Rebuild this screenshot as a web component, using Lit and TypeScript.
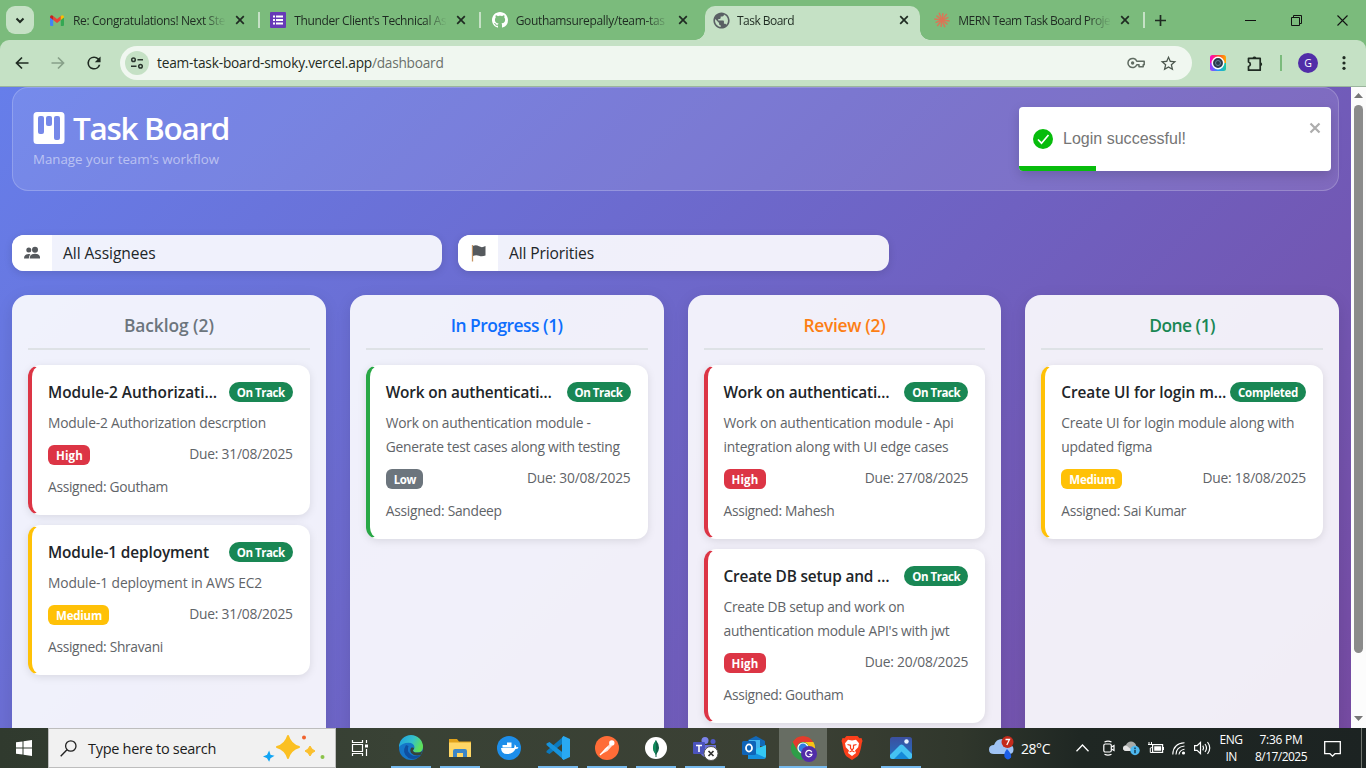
import { LitElement, html, css, svg } from "lit";
import { customElement, property } from "lit/decorators.js";

/** Single line of text whose tracking is adjusted so that it spans `w` pixels. */
@customElement("fit-text")
class FitText extends LitElement {
  @property() text = "";
  @property({ type: Number }) w = 0;
  static styles = css`
    :host { display: inline-block; white-space: pre; text-align: left; }
    .s { display: inline-block; }
  `;
  updated() {
    const s = this.renderRoot.querySelector(".s") as HTMLElement;
    s.style.letterSpacing = "0px";
    const natural = s.getBoundingClientRect().width;
    if (this.w) {
      s.style.letterSpacing = `${(this.w - natural) / this.text.length}px`;
      this.style.width = `${this.w}px`;
    }
  }
  render() { return html`<span class="s">${this.text}</span>`; }
}

const t = (text: string, w: number) => html`<fit-text .text=${text} .w=${w}></fit-text>`;

const icon = (w: number, h: number, vb: string, body: unknown) =>
  html`<svg width=${w} height=${h} viewBox=${vb} fill="none">${body}</svg>`;

const closeX = icon(10, 10, "0 0 10 10", svg`<path d="M1.2 1.2 8.8 8.8M8.8 1.2 1.2 8.8" stroke="#1f2b22" stroke-width="1.7"/>`);

const gmail = icon(14, 11, "0 0 14 11", svg`
  <path d="M0 2v8q0 1 1 1h2.200V4z" fill="#4285f4"/><path d="M14 2v8q0 1-1 1h-2.200V4z" fill="#34a853"/>
  <path d="M3.200 1 7 4l3.800-3v4L7 8 3.200 5z" fill="#ea4335"/>
  <path d="M0 2.200C0 .2 1.800-.4 3.200 1v4L0 2.600z" fill="#c5221f"/><path d="M14 2.200C14 .2 12.200-.4 10.800 1v4L14 2.600z" fill="#fbbc04"/>`);
const forms = icon(16, 16, "0 0 16 16", svg`
  <rect width="16" height="16" rx="1" fill="#673ab7"/>
  <path d="M3 4.500h2M3 8h2M3 11.500h2M6 4.500h7M6 8h7M6 11.500h7" stroke="#fff" stroke-width="2"/>`);
const github = icon(16, 16, "0 0 16 16", svg`<path fill="#fff" d="M8 0C3.58 0 0 3.58 0 8c0 3.54 2.29 6.53 5.47 7.59.4.07.55-.17.55-.38 0-.19-.01-.82-.01-1.49-2.01.37-2.53-.49-2.69-.94-.09-.23-.48-.94-.82-1.13-.28-.15-.68-.52-.01-.53.63-.01 1.08.58 1.23.82.72 1.21 1.87.87 2.33.66.07-.52.28-.87.51-1.07-1.78-.2-3.64-.89-3.64-3.95 0-.87.31-1.59.82-2.15-.08-.2-.36-1.02.08-2.12 0 0 .67-.21 2.2.82.64-.18 1.32-.27 2-.27s1.36.09 2 .27c1.53-1.04 2.2-.82 2.2-.82.44 1.1.16 1.92.08 2.12.51.56.82 1.27.82 2.15 0 3.07-1.87 3.75-3.65 3.95.29.25.54.73.54 1.48 0 1.07-.01 1.93-.01 2.2 0 .21.15.46.55.38A8.01 8.01 0 0 0 16 8c0-4.420-3.580-8-8-8"/>`);
const globe = icon(17, 17, "1.500 1.500 21 21", svg`<path fill="#5a6064" d="M12 2C6.480 2 2 6.480 2 12s4.480 10 10 10 10-4.480 10-10S17.520 2 12 2zm-1 17.930c-3.950-.49-7-3.850-7-7.930 0-.62.08-1.210.21-1.790L9 15v1c0 1.100.9 2 2 2v1.930zm6.900-2.540c-.26-.81-1-1.390-1.900-1.390h-1v-3c0-.55-.45-1-1-1H8v-2h2c.55 0 1-.45 1-1V7h2c1.100 0 2-.9 2-2v-.41c2.930 1.190 5 4.060 5 7.410 0 2.080-.8 3.970-2.100 5.390z"/>`);
const burst = icon(16, 16, "-8 -8 16 16", svg`${Array.from({ length: 12 }, (_, i) =>
  svg`<path d="M0 0V${i % 2 ? -7.8 : -7}" stroke="#d97757" stroke-width="1.500" transform="rotate(${i * 30 + 8})"/>`)}`);

const tabs = [
  { icon: gmail, title: "Re: Congratulations! Next Ste", w: 152 },
  { icon: forms, title: "Thunder Client's Technical As", w: 152 },
  { icon: github, title: "Gouthamsurepally/team-tas", w: 149 },
  { icon: globe, title: "Task Board", w: 57, active: true },
  { icon: burst, title: "MERN Team Task Board Proje", w: 152 },
];

type Task = { title: string; tw: number; status: string; desc: [string, number][]; prio: "High" | "Medium" | "Low"; due: string; who: string; ww: number };
const columns: { name: string; w: number; cls: string; tasks: Task[] }[] = [
  { name: "Backlog (2)", w: 90, cls: "grey", tasks: [
    { title: "Module-2 Authorizati…", tw: 169, status: "On Track", desc: [["Module-2 Authorization descrption", 218]], prio: "High", due: "31/08/2025", who: "Goutham", ww: 120 },
    { title: "Module-1 deployment", tw: 161, status: "On Track", desc: [["Module-1 deployment in AWS EC2", 214]], prio: "Medium", due: "31/08/2025", who: "Shravani", ww: 115 },
  ] },
  { name: "In Progress (1)", w: 112, cls: "blue", tasks: [
    { title: "Work on authenticati…", tw: 166, status: "On Track", desc: [["Work on authentication module -", 205], ["Generate test cases along with testing", 234]], prio: "Low", due: "30/08/2025", who: "Sandeep", ww: 116 },
  ] },
  { name: "Review (2)", w: 82, cls: "orange", tasks: [
    { title: "Work on authenticati…", tw: 166, status: "On Track", desc: [["Work on authentication module - Api", 230], ["integration along with UI edge cases", 225]], prio: "High", due: "27/08/2025", who: "Mahesh", ww: 111 },
    { title: "Create DB setup and …", tw: 166, status: "On Track", desc: [["Create DB setup and work on", 181], ["authentication module API's with jwt", 226]], prio: "High", due: "20/08/2025", who: "Goutham", ww: 120 },
  ] },
  { name: "Done (1)", w: 66, cls: "green", tasks: [
    { title: "Create UI for login m…", tw: 165, status: "Completed", desc: [["Create UI for login module along with", 233], ["updated figma", 91]], prio: "Medium", due: "18/08/2025", who: "Sai Kumar", ww: 125 },
  ] },
];
const prioWidth = { High: 27, Medium: 46, Low: 22 };

@customElement("browser-chrome")
class BrowserChrome extends LitElement {
  static styles = css`
    :host { display: block; flex: none; font-family: "Open Sans", "Noto Sans", sans-serif; color: #1f2b22; }
    svg { display: block; flex: none; }
    .strip { height: 40px; background: #7bbb7c; display: flex; align-items: flex-end; padding-left: 6px; }
    .drop { width: 28px; height: 28px; margin: 0 7px 6px 0; border-radius: 9px; background: #c5e1c5; display: grid; place-items: center; }
    .tab { position: relative; width: 215px; height: 34px; margin-right: 6.330px; display: flex; align-items: center; box-sizing: border-box; padding: 0 11px 6px 8px; border-radius: 10px 10px 0 0; font-size: 12px; }
    .tab .fav { width: 16px; display: grid; place-items: center; margin-right: 8px; }
    .tab:first-of-type .fav { margin-right: 7px; }
    .tab .title { width: 152px; margin-right: 10px; overflow: hidden; line-height: 20px; padding-top: 1px; -webkit-mask-image: linear-gradient(90deg, #000 130px, transparent 153px); }
    .tab.sep::after { content: ""; position: absolute; left: 217px; top: 6px; width: 2px; height: 16px; background: #c5e1c5; }
    .active { background: #c5e1c5; }
    .active::before, .active::after { content: ""; position: absolute; bottom: 0; width: 10px; height: 10px; }
    .active::before { left: -10px; background: radial-gradient(circle at 0 0, transparent 9.500px, #c5e1c5 10px); }
    .active::after { right: -10px; background: radial-gradient(circle at 100% 0, transparent 9.500px, #c5e1c5 10px); }
    .plus { margin: 0 0 14px 7px; }
    .win { margin-left: auto; display: flex; gap: 35px; padding: 0 18px 14px 0; align-items: center; }
    .barwrap { background: #7bbb7c; }
    .bar { height: 46px; background: #c5e1c5; border-radius: 9px 9px 0 0; display: flex; align-items: center; padding-left: 15px; border-bottom: 1px solid #9bb59d; }
    .nav { display: flex; gap: 22px; align-items: center; width: 105px; }
    .url { width: 1072px; height: 34px; border-radius: 17px; background: #f0f7f0; display: flex; align-items: center; box-sizing: border-box; padding: 0 15px 0 5px; }
    .tune { width: 24px; height: 24px; border-radius: 50%; background: #c5e1c5; display: grid; place-items: center; margin-right: 8px; }
    .addr { font-size: 13.700px; line-height: 20px; }
    .path { color: #6a706b; }
    .acts { margin-left: auto; display: flex; gap: 15px; align-items: center; }
    .ext { display: flex; align-items: center; gap: 21px; padding-left: 18px; }
    .line { width: 2px; height: 16px; background: #7bbb7c; margin: 0 -5px 0 -5px; }
    .ava { width: 20px; height: 20px; border-radius: 50%; background: #512da8; color: #fff; font-size: 10.500px; display: grid; place-items: center; line-height: 20px; margin-right: 3px; }
  `;
  render() {
    return html`
      <div class="strip">
        <div class="drop">${icon(10, 7, "0 0 10 7", svg`<path d="M1.500 1.500 5 5l3.500-3.500" stroke="#1f2b22" stroke-width="2"/>`)}</div>
        ${tabs.map((b, i) => html`
          <div class="tab ${b.active ? "active" : i !== 2 ? "sep" : ""}">
            <div class="fav">${b.icon}</div>
            <div class="title">${t(b.title, b.w)}</div>${closeX}
          </div>`)}
        <div class="plus">${icon(11, 11, "0 0 11 11", svg`<path d="M5.500 0v11M0 5.500h11" stroke="#1f2b22" stroke-width="1.700"/>`)}</div>
        <div class="win">
          ${icon(11, 11, "0 0 11 11", svg`<path d="M0 5.500h11" stroke="#111"/>`)}
          ${icon(11, 11, "0 0 11 11", svg`<path d="M.5 2.500h8v8h-8zM2.500 2.500v-2h8v8h-2" stroke="#111"/>`)}
          ${icon(11, 11, "0 0 11 11", svg`<path d="M.5.5l10 10M10.500.5l-10 10" stroke="#111" stroke-width="1.100"/>`)}
        </div>
      </div>
      <div class="barwrap"><div class="bar">
        <div class="nav">
          ${icon(14, 14, "0 0 14 14", svg`<path d="M13.500 7H2M7 1.500 1.500 7 7 12.500" stroke="#1f2b22" stroke-width="1.700"/>`)}
          ${icon(14, 14, "0 0 14 14", svg`<path d="M.5 7H12M7 1.500 12.500 7 7 12.500" stroke="#87a089" stroke-width="1.700"/>`)}
          ${icon(14, 14, "3.500 3.500 17 17", svg`<path fill="#1f2b22" d="M17.650 6.350A7.950 7.950 0 0 0 12 4a8 8 0 1 0 7.730 10h-2.080A6 6 0 1 1 12 6c1.660 0 3.140.69 4.220 1.780L13 11h7V4z"/>`)}
        </div>
        <div class="url">
          <div class="tune">${icon(14, 12, "0 0 14 12", svg`<g stroke="#2a352d" stroke-width="1.500"><circle cx="3.500" cy="2.800" r="1.800"/><path d="M7.500 2.800H13M1 9.200h5.500"/><circle cx="10.500" cy="9.200" r="1.800"/></g>`)}</div>
          <div class="addr">${t("team-task-board-smoky.vercel.app", 215)}<span class="path">${t("/dashboard", 71.500)}</span></div>
          <div class="acts">
            ${icon(18, 12, "0 0 18 12", svg`<path d="M9.800 4.200A4.600 4.600 0 1 0 9.800 7.800H12v2h4.200v-2H17.200V4.200z" stroke="#5f6b61" stroke-width="1.500" stroke-linejoin="round"/><circle cx="5.600" cy="6" r="1.700" fill="#5f6b61"/>`)}
            ${icon(17, 17, "1.200 1.200 21.600 21.600", svg`<path fill="#4c574e" d="M22 9.240l-7.190-.62L12 2 9.190 8.630 2 9.240l5.460 4.730L5.820 21 12 17.270 18.180 21l-1.630-7.030L22 9.240zM12 15.400l-3.760 2.270 1-4.280-3.320-2.880 4.380-.38L12 6.100l1.710 4.040 4.380.38-3.320 2.880 1 4.280L12 15.400z"/>`)}
          </div>
        </div>
        <div class="ext">
          ${icon(16, 16, "0 0 16 16", svg`<defs><linearGradient id="a" x1="0" y1="0" x2="1" y2="0"><stop stop-color="#f0c"/><stop offset=".5" stop-color="#f43"/><stop offset="1" stop-color="#fa0"/></linearGradient><linearGradient id="b"><stop stop-color="#a3f"/><stop offset=".5" stop-color="#29f"/><stop offset="1" stop-color="#1dc99b"/></linearGradient></defs>
            <path d="M0 8V2.500Q0 0 2.500 0h11Q16 0 16 2.500V8z" fill="url(#a)"/><path d="M0 8v5.500Q0 16 2.500 16h11q2.500 0 2.500-2.500V8z" fill="url(#b)"/><circle cx="8" cy="8" r="5.700" fill="#2c3a4c" stroke="#fff" stroke-width="1.500"/><circle cx="8" cy="8" r="2.500" stroke="#66809a"/>`)}
          ${icon(17, 17, "0 0 17 17", svg`<path d="M1.500 3.300H13.200V15.200H1.500V11.500A2.300 2.300 0 0 0 1.500 7z" stroke="#1f2b22" stroke-width="1.700" stroke-linejoin="round"/><path d="M5.600 3a1.900 1.900 0 0 1 3.700 0zM13.700 7.300a1.900 1.900 0 0 1 0 3.700z" fill="#1f2b22"/>`)}
          <div class="line"></div>
          <div class="ava">G</div>
          ${icon(4, 14, "0 0 4 14", svg`<g fill="#1f2b22"><circle cx="2" cy="1.700" r="1.600"/><circle cx="2" cy="7" r="1.600"/><circle cx="2" cy="12.300" r="1.600"/></g>`)}
        </div>
      </div></div>`;
  }
}

@customElement("task-card")
class TaskCard extends LitElement {
  @property({ attribute: false }) task!: Task;
  static styles = css`
    :host { display: block; }
    .card { background: #fff; border: 1px solid transparent; border-left: 4px solid; border-radius: 12px; padding: 16px 16px 15px; box-shadow: 0 2px 8px rgba(0, 0, 0, .1); color: #5f6468; font-size: 13.800px; line-height: 24px; }
    .High { border-left-color: #dc3545; } .Medium { border-left-color: #ffc107; } .Low { border-left-color: #28a745; }
    .head { display: flex; justify-content: space-between; height: 21px; margin-bottom: 8px; }
    .title { color: #212529; font-size: 15.400px; font-weight: 600; line-height: 21px; }
    .pill, .prio { color: #fff; font-weight: 700; font-size: 11.500px; line-height: 21px; height: 20px; padding: 0 7px 0 8px; }
    .pill { background: #198754; border-radius: 10px; padding: 0 8px; }
    .desc > div { height: 24px; }
    .meta { display: flex; justify-content: space-between; margin: 8px 0; height: 24px; }
    .prio { border-radius: 6px; margin-top: 2px; }
    .prio.High { background: #dc3545; } .prio.Medium { background: #ffc107; } .prio.Low { background: #6c757d; }
    .due { line-height: 22px; }
  `;
  render() {
    const k = this.task;
    return html`<div class="card ${k.prio}">
      <div class="head"><div class="title">${t(k.title, k.tw)}</div><div class="pill">${t(k.status, k.status === "Completed" ? 60 : 48)}</div></div>
      <div class="desc">${k.desc.map(([s, w]) => html`<div>${t(s, w)}</div>`)}</div>
      <div class="meta"><div class="prio ${k.prio}">${t(k.prio, prioWidth[k.prio])}</div><div class="due">${t("Due: " + k.due, 103.500)}</div></div>
      <div>${t("Assigned: " + k.who, k.ww)}</div>
    </div>`;
  }
}

@customElement("board-page")
class BoardPage extends LitElement {
  static styles = css`
    :host { display: flex; flex: 1; min-height: 0; position: relative; font-family: "Open Sans", "Noto Sans", sans-serif; }
    svg { display: block; }
    .page { width: 1327px; padding: 0 12px; background: linear-gradient(135deg, #667eea 0%, #764ba2 100%); overflow: hidden; }
    .hero { height: 104px; box-sizing: border-box; border: 1px solid rgba(255, 255, 255, .2); border-radius: 16px; background: rgba(255, 255, 255, .1); padding: 24px 20px; color: #fff; }
    .brand { display: flex; gap: 8px; height: 34px; }
    .brand b { font-weight: 600; font-size: 31.500px; line-height: 32px; }
    .sub { font-size: 13.300px; font-weight: 500; line-height: 20px; color: rgba(255, 255, 255, .5); margin-top: 3px; }
    .filters { display: grid; grid-template-columns: 430px 431px; gap: 16px; margin: 44px 0 24px; }
    .filter { height: 36px; border-radius: 12px; overflow: hidden; display: flex; background: rgba(255, 255, 255, .9); color: #212529; font-size: 15.600px; line-height: 37px; }
    .fwrap { border-radius: 12px; box-shadow: 0 2px 8px rgba(0, 0, 0, .12); }
    .ficon { width: 40px; background: #fff; display: grid; place-items: center; margin-right: 11px; }
    .cols { display: grid; grid-template-columns: repeat(4, 1fr); gap: 24px; }
    .col { height: 520px; border-radius: 16px; background: rgba(255, 255, 255, .9); padding: 16px; box-sizing: border-box; box-shadow: 0 4px 16px rgba(0, 0, 0, .1); display: flex; flex-direction: column; gap: 10px; }
    h2 { margin: 0 0 5px; height: 37px; line-height: 28px; font-size: 17.400px; font-weight: 600; text-align: center; border-bottom: 2px solid #dee2e6; }
    .grey { color: #6c757d; } .blue { color: #0d6efd; } .orange { color: #fd7e14; } .green { color: #198754; }
    .scroll { width: 15px; background: #fcfcfc; display: flex; flex-direction: column; align-items: center; padding-top: 6px; box-sizing: border-box; }
    .thumb { width: 9px; height: 548px; border-radius: 5px; background: #8b8b8b; margin: 7px 0 63px; }
    .toast { position: absolute; right: 35px; top: 20px; width: 312px; height: 64px; border-radius: 4px; background: #fff; display: flex; align-items: center; box-sizing: border-box; padding-left: 14px; overflow: hidden; font: 16px/20px "Liberation Sans", sans-serif; color: #757575; gap: 10px; }
    .shade { position: absolute; right: 35px; top: 20px; width: 312px; height: 64px; border-radius: 4px; box-shadow: 0 4px 12px rgba(0, 0, 0, .15); }
    .x { margin: 0 10px 22px auto; }
    .prog { position: absolute; left: 0; bottom: 0; width: 77px; height: 5px; background: #07bc0c; }
  `;
  render() {
    return html`
      <div class="page">
        <div class="hero">
          <div class="brand">
            ${icon(32, 32, "0 0 32 32", svg`<path fill="#fff" fill-rule="evenodd" d="M4 0h24q3.500 0 3.500 3.500v25Q31.500 32 28 32H4Q.5 32 .5 28.500v-25Q.5 0 4 0zM7 4q-2 0-2 2v14q0 2 2 2h2q2 0 2-2V6q0-2-2-2zM15 4q-2 0-2 2v6q0 2 2 2h2q2 0 2-2V6q0-2-2-2zM23 4q-2 0-2 2v20q0 2 2 2h2q2 0 2-2V6q0-2-2-2z"/>`)}
            <b>${t("Task Board", 156)}</b>
          </div>
          <div class="sub">${t("Manage your team's workflow", 186)}</div>
        </div>
        <div class="filters">
          <div class="fwrap"><div class="filter"><div class="ficon">${icon(16, 14, "0 0 16 14", svg`<g fill="#55595d"><circle cx="4.800" cy="4" r="2.500"/><path d="M0 12.500q0-4.500 4.800-4.500 1 0 1.700.3-1.500 1.500-1.700 4.200z"/><circle cx="11" cy="3.800" r="3"/><path d="M5.700 12.500q0-4.800 5.300-4.800t5.200 4.800z"/></g>`)}</div>${t("All Assignees", 92.500)}</div></div>
          <div class="fwrap"><div class="filter"><div class="ficon">${icon(16, 17, "-1 0 16 17", svg`<path d="M1.500 0v16.500" stroke="#c69462" stroke-width="1.300"/><path d="M2 1q3-1.500 6 .3t6.500-.3v9.500q-3.500 1.500-6.500.3T2 11z" fill="#55595d"/>`)}</div>${t("All Priorities", 85)}</div></div>
        </div>
        <div class="cols">
          ${columns.map((c) => html`<div class="col"><h2 class=${c.cls}>${t(c.name, c.w)}</h2>${c.tasks.map((k) => html`<task-card .task=${k}></task-card>`)}</div>`)}
        </div>
      </div>
      <div class="scroll">
        ${icon(9, 5, "0 0 9 5", svg`<path d="M0 5 4.500 0 9 5z" fill="#777"/>`)}
        <div class="thumb"></div>
        ${icon(9, 5, "0 0 9 5", svg`<path d="M0 0 4.500 5 9 0z" fill="#777"/>`)}
      </div>
      <div class="shade"></div>
      <div class="toast">
        ${icon(20, 20, "0 0 20 20", svg`<circle cx="10" cy="10" r="10" fill="#07bc0c"/><path d="M5 10.500l3.500 3.700L15.500 6" stroke="#fff" stroke-width="1.700"/>`)}
        <span>${t("Login successful!", 123)}</span>
        <div class="x">${icon(12, 12, "0 0 12 12", svg`<path d="M1.500 1.500l9 9M10.500 1.500l-9 9" stroke="#adadad" stroke-width="2.200"/>`)}</div>
        <div class="prog"></div>
      </div>`;
  }
}

const apps: { name: string; run?: boolean; active?: boolean; art: unknown }[] = [
  { name: "edge", run: true, art: svg`<defs><linearGradient id="e1" x1="0" y1="0" x2="1" y2=".4"><stop stop-color="#1b9de2"/><stop offset=".6" stop-color="#35c1c9"/><stop offset="1" stop-color="#5ee05a"/></linearGradient></defs>
    <circle cx="12" cy="12" r="12" fill="#1576c8"/><path d="M0 11A12 12 0 0 1 24 11q0 5.500-6 5.500-4 0-4-2.300 1.500-1 1.500-3Q15 7 9.500 6.800 3 7 0 11z" fill="url(#e1)"/><path d="M7 9q-5 8 2.500 13 7 3 12.500-3-6 2.500-10.500-.8Q7.500 15 9.500 10z" fill="#0f4fa0"/><path d="M14 14.200q0 2.300 4 2.300 4.500 0 5.600-2.300L22 18.800q-6 2.200-9.800-1.800-2-2.800.3-5.500 2.500-.5 2.500 1z" fill="#38423a"/>` },
  { name: "files", run: true, art: svg`<path d="M1 3h8l2 2.500H23V21H1z" fill="#e0a21b"/><path d="M1 6.500h22V21H1z" fill="#ffd766"/><path d="M5 21v-6q0-2 2-2h10q2 0 2 2v6h-4v-4H9v4z" fill="#3b86c8"/>` },
  { name: "docker", art: svg`<circle cx="12" cy="12" r="12" fill="#1d8eea"/><path d="M4 12h13q1-2 .3-3.500 2 .8 2 2.700 1.200-.4 2.200.3-.8 1.500-3 1.600Q16 18 10 18q-5.500 0-6-6zM5.500 9h9v2.500h-9zM10 6.500h4.500V9H10z" fill="#fff"/>` },
  { name: "code", run: true, art: svg`<path d="M18 0v6.500L3.500 18 .5 16.500V15z" fill="#0b79bd"/><path d="M18 24v-6.500L3.500 6 .5 7.500V9z" fill="#1793dc"/><path d="M17.500 0 24 3v18l-6.500 3-1.500-1.500V1.500z" fill="#29a9f2"/>` },
  { name: "postman", run: true, art: svg`<circle cx="12" cy="12" r="12" fill="#ff6c37"/><path d="M5 19l5-6.500L15 8l2 2-4.500 5z" fill="#ffe3d8"/><path d="M5 19l8-8" stroke="#fff" stroke-width="1.200"/><circle cx="16.800" cy="7" r="2.700" fill="#fff"/>` },
  { name: "mongo", run: true, art: svg`<circle cx="12" cy="12" r="11" fill="#fff"/><path d="M12 4q6 8 0 15-6-7 0-15z" fill="#116149"/><path d="M12 4q-6 8 0 15z" fill="#0f8a5a"/><path d="M12 17v4" stroke="#116149"/>` },
  { name: "teams", run: true, art: svg`<circle cx="12" cy="4.500" r="3.500" fill="#7b83eb"/><circle cx="20" cy="5.500" r="2.500" fill="#5059c9"/><path d="M7 9h16v6q0 6-6 7-8 0-10-6z" fill="#6a70d8"/><rect x="0" y="6" width="12" height="12" rx="1" fill="#4b53bc"/><path d="M3 9.500h6M6 9.500V16" stroke="#fff" stroke-width="1.600"/><circle cx="18" cy="17.500" r="7" fill="#fff" stroke="#555"/><path d="M15.500 15l5 5M20.500 15l-5 5" stroke="#333" stroke-width="1.700"/>` },
  { name: "outlook", art: svg`<path d="M6 4 14 0l9 5v5H6z" fill="#1268b8"/><path d="M7 4h11v9H7z" fill="#41b4ee"/><path d="M24 9v11q0 2.500-2.500 2.500H6V16z" fill="#34c8f5"/><path d="M6 14l18 8-2 1H6z" fill="#1490df"/><rect x="0" y="5" width="14" height="14" rx="1.500" fill="#0f64b8"/><ellipse cx="7" cy="12" rx="3" ry="3.600" stroke="#fff" stroke-width="1.800"/>` },
  { name: "chrome", run: true, active: true, art: svg`<circle cx="12" cy="12" r="12" fill="#2e9e48"/><path d="M1.600 6A12 12 0 0 1 22.400 6H12a6 6 0 0 0-5.200 9z" fill="#e33b2e"/><path d="M12 6h10.400A12 12 0 0 1 12 24l5.200-9A6 6 0 0 0 12 6z" fill="#fbc116"/><circle cx="12" cy="12" r="5.600" fill="#fff"/><circle cx="12" cy="12" r="4.400" fill="#2f7de1"/><circle cx="18" cy="18" r="8" fill="#512da8"/><path d="M20.800 16.200a3.200 3.200 0 1 0 .2 2.200H18.300" stroke="#fff" stroke-width="1.200"/>` },
  { name: "brave", art: svg`<path d="M6.500 0h11l2 2.200 2-.2 1 3-.7 2q-1.500 11-4.500 13.500L12 24l-5.300-3.500Q3.700 18 2.200 7l-.7-2 1-3 2 .2z" fill="#fb3f1b"/><path d="M12 4.500l4-.8 3 3.500-.8 4-3.200 3.300 1 2.500L12 20l-4-3 1-2.500-3.200-3.300-.8-4 3-3.500z" fill="#fff"/><path d="M7.500 8.500l3 .8v3L12 14l1.500-1.700v-3l3-.8M9.500 16l2.500-1.200 2.500 1.200" stroke="#fb3f1b" stroke-width="1.200"/>` },
  { name: "photos", run: true, art: svg`<defs><linearGradient id="p1" x1="0" y1="0" x2="0" y2="1"><stop stop-color="#3c4f9f"/><stop offset="1" stop-color="#2173c4"/></linearGradient></defs><rect x="1" y="1" width="22" height="22" rx="2.500" fill="url(#p1)"/><path d="M1 19l10-10q1.500-1 3 0l9 9v2.500q0 2.500-2.500 2.500h-17Q1 23 1 20.500z" fill="#45c2f2"/><path d="M5 23l7.500-7.500L20 23z" fill="#1589d8"/><circle cx="17.500" cy="5.500" r="2.200" fill="#e8f4ff"/>` },
];

@customElement("task-bar")
class TaskBar extends LitElement {
  static styles = css`
    :host { display: flex; flex: none; height: 40px; align-items: center; color: #fff; font-family: "Open Sans", "Noto Sans", sans-serif; background: linear-gradient(90deg, #303a2e 0, #394235 400px, #3b4034 800px, #30372c 960px, #1f2723 1080px, #1c2322 1366px); }
    svg { display: block; overflow: visible; flex: none; }
    .start { width: 48px; display: grid; place-items: center; }
    .search { width: 288px; height: 40px; box-sizing: border-box; border: 1px solid #bdbdbd; background: #f1f1f1; color: #1c1c1c; display: flex; align-items: center; padding: 0 9px 0 11px; font-size: 14.500px; }
    .search fit-text { margin-left: 11px; }
    .search .stars { margin-left: auto; }
    .view { width: 48px; display: grid; place-items: center; margin-right: 2.500px; }
    .app { width: 49px; height: 40px; display: grid; place-items: center; position: relative; }
    .app.active { background: linear-gradient(90deg, transparent .5px, #676d63 .5px, #676d63 48.500px, transparent 48.500px); }
    .run::after { content: ""; position: absolute; left: 4.500px; right: 4.500px; bottom: 0; height: 2px; background: #76b9ed; }
    .active.run::after { left: .5px; right: .5px; }
    .run:last-of-type::after { right: 4.500px; }
    .tray { margin-left: auto; display: flex; align-items: center; font-size: 12px; }
    .temp { font-size: 14px; margin: 0 26px 0 7px; }
    .sys { display: flex; align-items: center; gap: 8px; }
    .sys svg:first-child { margin-right: 6px; }
    .stack { text-align: center; line-height: 17px; font-size: 12px; padding-bottom: 1px; }
    .lang { margin: 0 12px 0 8px; width: 24px; }
    .note { margin: 0 20px 0 17px; }
    .peek { width: 1px; height: 40px; background: #70756f; margin-right: 4px; }
  `;
  render() {
    return html`
      <div class="start">${icon(16, 16, "0 0 16 16", svg`<path fill="#fff" d="M0 2.300 6.500 1.400V7.500H0zM7.500 1.200 16 0v7.500H7.500zM0 8.500h6.500v6.100L0 13.700zM7.500 8.500H16V16l-8.500-1.200z"/>`)}</div>
      <div class="search">
        ${icon(17, 17, "0 0 17 17", svg`<circle cx="10.800" cy="6" r="5.200" stroke="#222" stroke-width="1.300"/><path d="M7 9.800.7 16.200" stroke="#222" stroke-width="1.400"/>`)}
        ${t("Type here to search", 128)}
        <div class="stars">${icon(62, 26, "0 0 62 26", svg`
          <path d="M24 1q2.500 8.500 11 11-8.500 2.500-11 11-2.500-8.500-11-11 8.500-2.500 11-11z" fill="#fbc023" stroke="#fbc023" stroke-width="2" stroke-linejoin="round"/>
          <path d="M46 11q1.300 3.500 5 5-3.700 1.500-5 5-1.300-3.500-5-5 3.700-1.500 5-5z" fill="#fbc02d" stroke="#fbc02d" stroke-linejoin="round"/>
          <path d="M5 17.500l1 3 2.500.5-2.500 1.500-1 2.500-1.500-2.500-2.500-1 2.500-1z" fill="#12a5f4" stroke="#12a5f4" stroke-width="1.500"/>
          <circle cx="40" cy="2.500" r="2" fill="#f0622d"/><circle cx="58.500" cy="22" r="2" fill="#8bc34a"/>`)}</div>
      </div>
      <div class="view">${icon(16, 16, "0 0 16 16", svg`<path d="M.5 0v2.500h10V0M.5 16v-2.500h10V16M.5 4.500h10v7H.5zM14.500 0v3M14.500 9v7" stroke="#fff" stroke-width="1.200"/><path d="M13 4.500h3v3h-3z" fill="#fff"/>`)}</div>
      ${apps.map((a) => html`<div class="app ${a.run ? "run" : ""} ${a.active ? "active" : ""}">${icon(24, 24, "0 0 24 24", a.art)}</div>`)}
      <div class="tray">
        ${icon(25, 25, "0 0 25 25", svg`<path d="M5 18q-5 0-5-4.500T5 9q2-6 8-6 5 0 7 5 4.500 1 4.500 5.500T20 18z" fill="#9fc3f5"/><path d="M18 13q5 5 4 8.500-3.500 4-6.500-.5Q14.500 17 18 13z" fill="#1c5ee8"/><circle cx="18.500" cy="6" r="6" fill="#c42b1c"/><path d="M16.500 3.500h4L17.800 9" stroke="#fff" stroke-width="1.300"/>`)}
        <span class="temp">${t("28°C", 29)}</span>
        <div class="sys">
          ${icon(13, 8, "0 0 13 8", svg`<path d="M.5 7.200 6.500 1l6 6.200" stroke="#fff" stroke-width="1.300"/>`)}
          ${icon(12, 16, "0 0 12 16", svg`<g stroke="#fff" stroke-width="1.200"><rect x=".8" y="4" width="7.500" height="8" rx="1.500"/><path d="M8.500 7l2.500-1.500v5L8.500 9M1.500 2Q5 .2 8.500 2M1.500 14.200q3.500 1.800 7 0"/></g>`)}
          ${icon(17, 14, "0 0 17 14", svg`<path d="M3 10Q0 9.500 0 7t3-3q1.500-3.500 5-3.500T13 4l1 6z" fill="#a7aaa8"/><path d="M3 10q-3-.5-3-3 1-3 4-2l6 5z" fill="#e4e4e4"/><circle cx="12" cy="9.500" r="4.700" fill="#4db8f0"/><path d="M12 6.500V8M12 8.800v3.400" stroke="#12364b" stroke-width="1.400"/>`)}
          ${icon(16, 12, "0 0 16 12", svg`<rect x="4.600" y="2.600" width="10" height="7.800" stroke="#fff" stroke-width="1.200"/><path d="M6.200 4.200h7v4.600h-7zM14.600 5H16v3h-1.400z" fill="#fff"/><path d="M1 0v2.500M3.500 0v2.500M0 2.500h4.500v2Q4 6 2.300 6v4.500H5" stroke="#fff"/>`)}
          ${icon(14, 13, "0 0 14 13", svg`<g stroke="#fff" stroke-width="1.100"><path d="M.8 12.500Q1 1.500 12.500.8M4 12.500Q4 5 12.500 4M7 12.500Q7.500 8 12.500 7.200"/></g><circle cx="11.500" cy="11" r="1.600" fill="#fff"/>`)}
          ${icon(17, 14, "0 0 17 14", svg`<g stroke="#fff" stroke-width="1.200"><path d="M.6 4.700h2.500L6.500 1.500v11L3.100 9.300H.6zM8.800 4.700q1.500 2.300 0 4.600M11 3q3 4 0 8M13.500 1q4.500 6 0 12"/></g>`)}
        </div>
        <div class="stack lang"><div>${t("ENG", 23)}</div><div>${t("IN", 11)}</div></div>
        <div class="stack"><div>${t("7:36 PM", 43)}</div><div>${t("8/17/2025", 52)}</div></div>
        <div class="note">${icon(17, 17, "0 0 17 17", svg`<path d="M.7 1.700h15.600v12H11l-2.500 2.500L6 13.700H.7z" stroke="#fff" stroke-width="1.300"/>`)}</div>
        <div class="peek"></div>
      </div>`;
  }
}

@customElement("app-root")
class AppRoot extends LitElement {
  static styles = css`
    :host { display: flex; flex-direction: column; width: 1366px; height: 768px; overflow: hidden; }
  `;
  render() { return html`<browser-chrome></browser-chrome><board-page></board-page><task-bar></task-bar>`; }
}
